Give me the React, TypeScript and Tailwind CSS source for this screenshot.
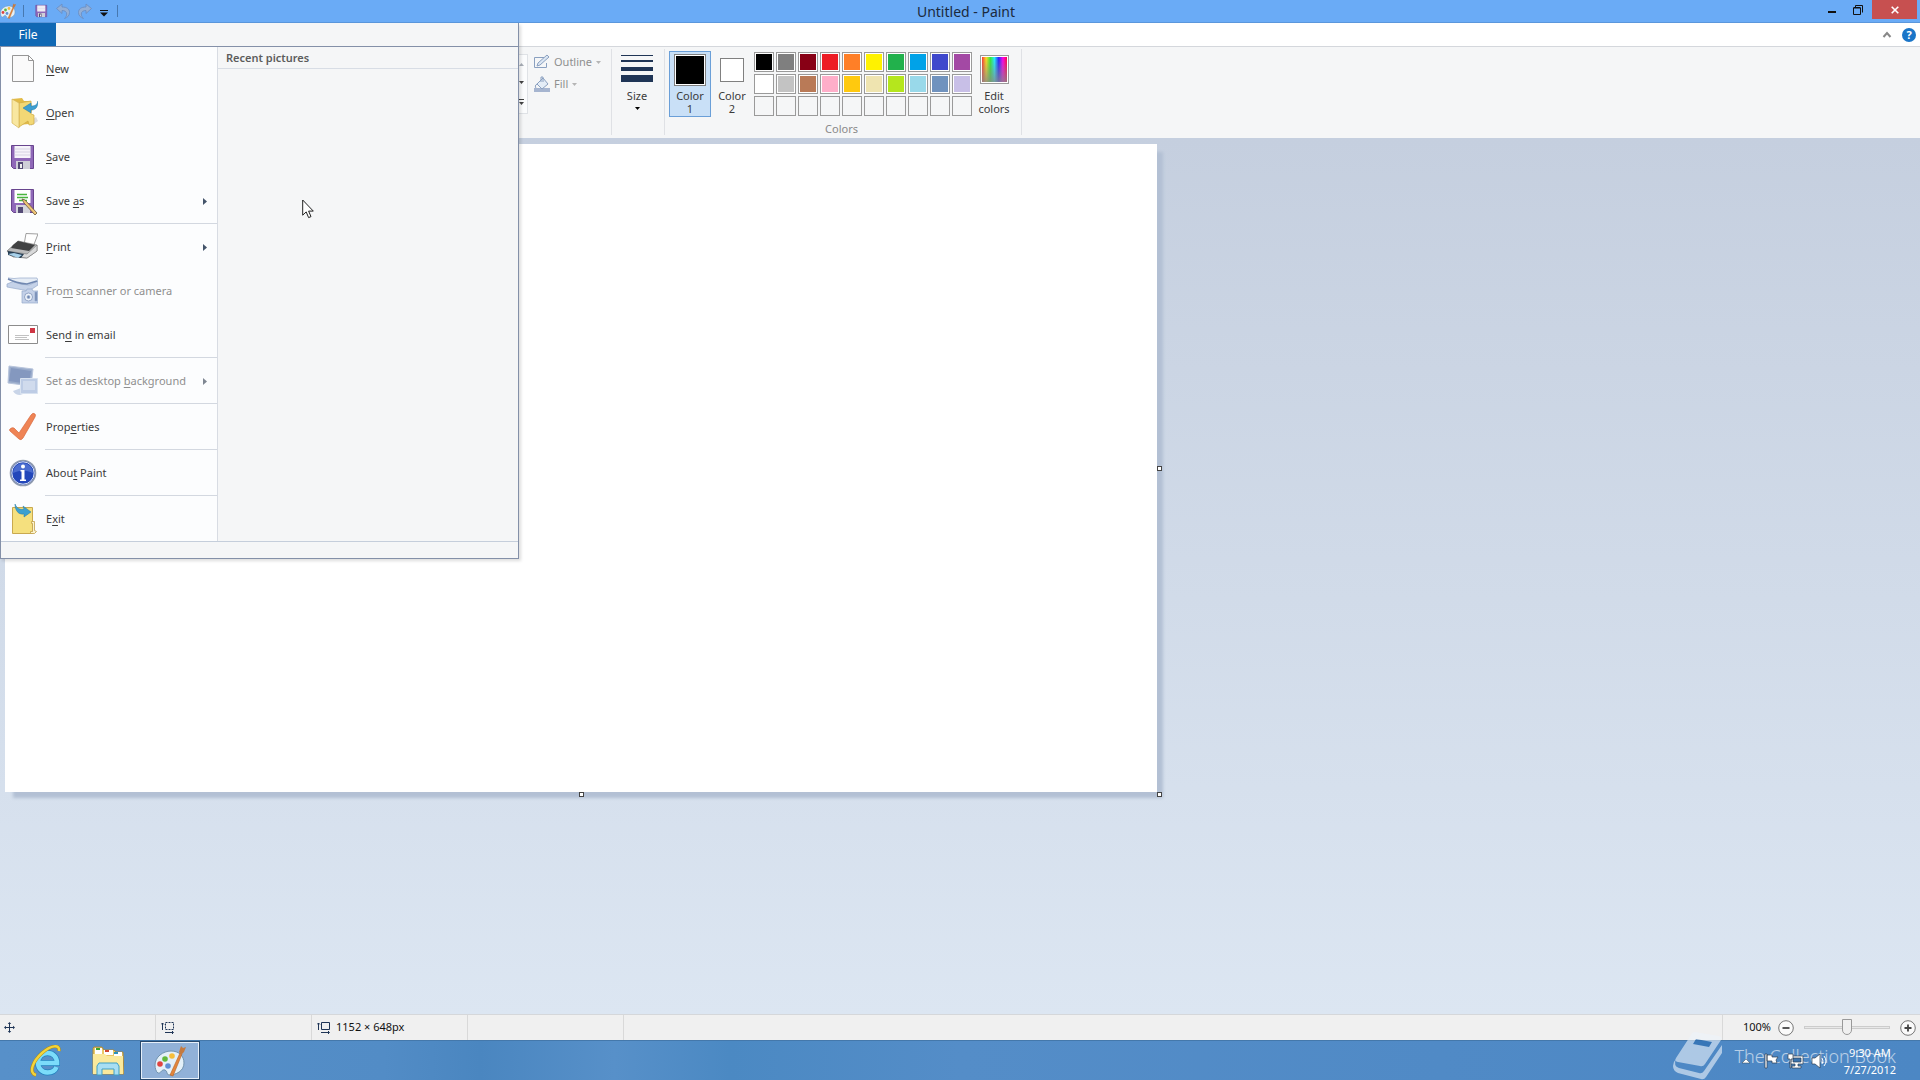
import { useState, type ReactNode } from "react";
import clsx from "clsx";

interface MenuEntry {
  before?: string;
  hotkey: string;
  after?: string;
  icon: ReactNode;
  arrow?: boolean;
  disabled?: boolean;
}

const MENU_GROUPS: MenuEntry[][] = [
  [
    { hotkey: "N", after: "ew", icon: <NewIcon /> },
    { hotkey: "O", after: "pen", icon: <OpenIcon /> },
    { hotkey: "S", after: "ave", icon: <FloppyIcon /> },
    { before: "Save ", hotkey: "a", after: "s", icon: <SaveAsIcon />, arrow: true },
  ],
  [
    { hotkey: "P", after: "rint", icon: <PrintIcon />, arrow: true },
    { before: "Fro", hotkey: "m", after: " scanner or camera", icon: <ScannerIcon />, disabled: true },
    { before: "Sen", hotkey: "d", after: " in email", icon: <MailIcon /> },
  ],
  [
    { before: "Set as desktop ", hotkey: "b", after: "ackground", icon: <DesktopIcon />, arrow: true, disabled: true },
  ],
  [{ before: "Prop", hotkey: "e", after: "rties", icon: <CheckIcon /> }],
  [{ before: "Abou", hotkey: "t", after: " Paint", icon: <InfoIcon /> }],
  [{ before: "E", hotkey: "x", after: "it", icon: <ExitIcon /> }],
];

const PALETTE = [
  { name: "Black", fill: "bg-black" },
  { name: "Gray-50%", fill: "bg-[#7f7f7f]" },
  { name: "Dark red", fill: "bg-[#880015]" },
  { name: "Red", fill: "bg-[#ed1c24]" },
  { name: "Orange", fill: "bg-[#ff7f27]" },
  { name: "Yellow", fill: "bg-[#fff200]" },
  { name: "Green", fill: "bg-[#22b14c]" },
  { name: "Turquoise", fill: "bg-[#00a2e8]" },
  { name: "Indigo", fill: "bg-[#3f48cc]" },
  { name: "Purple", fill: "bg-[#a349a4]" },
  { name: "White", fill: "bg-white" },
  { name: "Gray-25%", fill: "bg-[#c3c3c3]" },
  { name: "Brown", fill: "bg-[#b97a57]" },
  { name: "Rose", fill: "bg-[#ffaec9]" },
  { name: "Gold", fill: "bg-[#ffc90e]" },
  { name: "Light yellow", fill: "bg-[#efe4b0]" },
  { name: "Lime", fill: "bg-[#b5e61d]" },
  { name: "Light turquoise", fill: "bg-[#99d9ea]" },
  { name: "Blue-gray", fill: "bg-[#7092be]" },
  { name: "Lavender", fill: "bg-[#c8bfe7]" },
];

export default function App() {
  return (
    <div className="relative flex h-screen flex-col overflow-hidden font-['Noto_Sans','Open_Sans',sans-serif] text-[11px] text-[#3b3b3b]">
      <TitleBar />
      <TabStrip />
      <Ribbon />
      <Workspace />
      <StatusBar />
      <Taskbar />
      <FileMenu />
      <svg className="absolute left-[302px] top-[199px] h-5 w-3" viewBox="0 0 12 20">
        <path d="M.7 1v15.200l3.500-3.300 2.400 5.700 2.400-1-2.400-5.500h4.700z" fill="#fff" stroke="#222" />
      </svg>
    </div>
  );
}

function TitleBar() {
  return (
    <header className="flex h-[23px] shrink-0 items-start justify-between border-b border-[#5b97dc] bg-[#6aabf6]">
      <div className="flex h-full flex-1 items-center">
        <PaletteIcon className="h-4 w-4" />
        <span className="ml-[7px] h-3 w-px bg-[#4778b0]" />
        <button type="button" aria-label="Save" className="ml-[9px] h-4 w-4">
          <FloppyIcon className="h-4 w-4" />
        </button>
        <button type="button" aria-label="Undo" className="ml-1.5" disabled>
          <UndoIcon />
        </button>
        <button type="button" aria-label="Redo" className="ml-1.5" disabled>
          <UndoIcon className="-scale-x-100" />
        </button>
        <button type="button" aria-label="Customize Quick Access Toolbar" className="ml-[7px]">
          <svg className="mt-1 h-[7px] w-2" viewBox="0 0 8 7">
            <path d="M0 .5h8" stroke="#111" />
            <path d="M0 2.500h8L4 6.500z" fill="#111" />
          </svg>
        </button>
        <span className="ml-[9px] h-3 w-px bg-[#4778b0]" />
      </div>
      <h1 className="pl-3 text-sm leading-[23px] text-[#1b2a3d]">Untitled - Paint</h1>
      <div className="flex flex-1 justify-end">
        <button type="button" aria-label="Minimize" className="flex h-[19px] w-[26px] items-center justify-center">
          <svg className="h-3 w-2.5" viewBox="0 0 10 12">
            <path d="M1 8h8" stroke="#111" strokeWidth="2" />
          </svg>
        </button>
        <button type="button" aria-label="Restore" className="flex h-[19px] w-[27px] items-center pl-2">
          <svg className="h-2.5 w-2.5" viewBox="0 0 10 10" fill="none" stroke="#111">
            <path d="M.5 3h7v6.500h-7zM2.500 .5H9.500v7M0.500 2.500h7M2.500.5v2" />
          </svg>
        </button>
        <button type="button" aria-label="Close" className="mr-[3px] flex h-[19px] w-[45px] items-center justify-center bg-[#c75050]">
          <svg className="h-2 w-2" viewBox="0 0 8 8">
            <path d="M.7.7l6.600 6.600M7.300.7L.7 7.300" stroke="#fff" strokeWidth="1.600" />
          </svg>
        </button>
      </div>
    </header>
  );
}

function TabStrip() {
  return (
    <div className="flex h-6 shrink-0 items-center justify-end gap-2.5 border-b border-[#d4d7dc] bg-white pr-1">
      <button type="button" aria-label="Minimize the Ribbon">
        <svg className="h-2 w-2.5" viewBox="0 0 10 8">
          <path d="M1.500 6L5 2l3.500 4" fill="none" stroke="#888" strokeWidth="2" />
        </svg>
      </button>
      <button type="button" aria-label="Help" className="h-3.5 w-3.5 rounded-full bg-[#1a75c8] text-[11px] font-bold leading-3.5 text-white">
        ?
      </button>
    </div>
  );
}

function Ribbon() {
  const [activeColor, setActiveColor] = useState(1);

  return (
    <section aria-label="Home ribbon" className="flex h-[91px] shrink-0 bg-[#f5f6f7] pl-[519px]">
      <div className="mt-[7px] flex h-[60px] w-[9px] flex-col justify-between border border-l-0 border-[#dfe2e6] bg-[#fbfcfd] py-2">
        <Caret className="fill-[#a9afb8] -scale-y-100" />
        <Caret className="fill-[#444]" />
        <div className="flex flex-col gap-0.5">
          <span className="h-px w-[5px] bg-[#444]" />
          <Caret className="fill-[#444]" />
        </div>
      </div>
      <div className="flex w-[83px] flex-col items-start gap-1.5 pl-1.5 pt-[7px] text-[#8f8f8f]">
        <button type="button" disabled className="flex h-4 items-center gap-1">
          <OutlineIcon />
          Outline
          <Caret className="fill-[#b5b5b5]" />
        </button>
        <button type="button" disabled className="flex h-4 items-center gap-1">
          <FillIcon />
          Fill
          <Caret className="fill-[#b5b5b5]" />
        </button>
      </div>
      <Divider />
      <button type="button" className="flex w-[52px] flex-col items-center pr-0.5 pt-2">
        <svg className="h-7 w-8" viewBox="0 0 32 28" fill="#1f3556">
          <path d="M0 0h32v1H0zM0 5h32v2H0zM0 12h32v4H0zM0 20h32v7H0z" />
        </svg>
        <span className="mt-1.5 leading-[13px]">Size</span>
        <Caret className="mt-[5px] fill-black" />
      </button>
      <Divider />
      <div className="flex flex-col pl-1 pt-1">
        <div className="flex">
          <ColorSlot
            number={1}
            active={activeColor === 1}
            swatch="h-8 w-8 bg-black"
            onSelect={() => setActiveColor(1)}
          />
          <ColorSlot
            number={2}
            active={activeColor === 2}
            swatch="my-1 h-6 w-6 bg-white"
            onSelect={() => setActiveColor(2)}
          />
          <div className="ml-px mt-px grid grid-cols-10 content-start gap-0.5">
            {PALETTE.map((color) => (
              <button
                key={color.name}
                type="button"
                aria-label={color.name}
                className="h-5 w-5 border border-[#9a9a9a] bg-white p-px"
              >
                <span className={clsx("block h-full", color.fill)} />
              </button>
            ))}
            {Array.from({ length: 10 }, (_, i) => (
              <button
                key={i}
                type="button"
                aria-label={`Custom color ${i + 1}`}
                className="h-5 w-5 border border-[#9a9a9a] bg-[#f5f6f7]"
              />
            ))}
          </div>
          <button type="button" className="flex w-11 flex-col items-center pt-1">
            <span className="h-[29px] w-[29px] border border-[#9a9a9a] bg-white p-px">
              <span className="block h-full bg-[linear-gradient(to_top,#888c,transparent),linear-gradient(to_right,#f33,#fd2,#3e3,#2ef,#22f,#f0e,#f04)]" />
            </span>
            <span className="mt-[5px] leading-[13px]">Edit colors</span>
          </button>
        </div>
        <span className="mt-1 self-center pr-0.5 leading-4 text-[#8a8a8a]">Colors</span>
      </div>
      <div className="ml-[5px] flex">
        <Divider />
      </div>
    </section>
  );
}

function ColorSlot({
  number,
  active,
  swatch,
  onSelect,
}: {
  number: number;
  active: boolean;
  swatch: string;
  onSelect: () => void;
}) {
  return (
    <button
      type="button"
      aria-pressed={active}
      onClick={onSelect}
      className={clsx(
        "flex h-[66px] w-[42px] flex-col items-center border pt-0.5",
        active ? "border-[#6a9fd8] bg-[#c9e0f7]" : "border-transparent"
      )}
    >
      <span className={clsx("border border-[#808080] outline-offset-[-2px]", active && "outline outline-white", swatch)} />
      <span className="mt-[3px] w-8 leading-[13px]">Color {number}</span>
    </button>
  );
}

function Divider() {
  return <span className="my-0.5 h-[86px] w-px bg-[#dfe1e5]" />;
}

function Caret({ className }: { className?: string }) {
  return (
    <svg className={clsx("h-[3px] w-[5px] shrink-0", className)} viewBox="0 0 5 3">
      <path d="M0 0h5L2.500 3z" />
    </svg>
  );
}

function Workspace() {
  return (
    <main className="min-h-0 flex-1 bg-linear-to-b from-[#c5cfdf] to-[#dce6f2] pl-[5px] pt-1.5">
      <div className="relative h-[648px] w-[1152px] bg-white shadow-[7px_7px_3px_-1px_#b3c0d4]">
        <span className="absolute -right-[5px] top-[322px] h-[5px] w-[5px] border border-[#444] bg-white" />
        <span className="absolute -bottom-[5px] left-[574px] h-[5px] w-[5px] border border-[#444] bg-white" />
        <span className="absolute -bottom-[5px] -right-[5px] h-[5px] w-[5px] border border-[#444] bg-white" />
      </div>
    </main>
  );
}

function FileMenu() {
  return (
    <div className="absolute left-0 top-[23px] w-[519px] border-r border-[#8490a8] bg-[#f5f6f7] shadow-[2px_2px_3px_#0002]">
      <button type="button" className="block h-[23px] w-14 bg-[#1068b4] text-xs leading-[23px] text-white">
        File
      </button>
      <div className="border-b border-l border-t border-[#8490a8]">
        <div className="flex">
          <ul className="w-[217px] border-r border-[#d8dce3] bg-[#fcfdfe]">
            {MENU_GROUPS.map((group, i) => (
              <li key={i}>
                {i > 0 && <div className="ml-11 h-0.5 border-t border-[#d3d8e0]" />}
                {group.map((entry) => (
                  <MenuItem key={entry.hotkey} {...entry} />
                ))}
              </li>
            ))}
          </ul>
          <section className="flex-1">
            <h2 className="border-b border-[#d8dde5] pl-2 font-semibold leading-[21px] text-[#5c5c5c]">Recent pictures</h2>
          </section>
        </div>
        <div className="h-[17px] border-t border-[#c5cedb]" />
      </div>
    </div>
  );
}

function MenuItem({ before, hotkey, after, icon, arrow, disabled }: MenuEntry) {
  return (
    <button
      type="button"
      disabled={disabled}
      className={clsx("flex h-11 w-full items-center pl-[5px] pr-2.5 text-left", disabled && "text-[#8f8f8f]")}
    >
      <span className="mr-2 h-8 w-8">{icon}</span>
      <span className="flex-1 whitespace-nowrap">
        {before}
        <span className="underline underline-offset-2">{hotkey}</span>
        {after}
      </span>
      {arrow && (
        <svg className={clsx("h-[7px] w-1", disabled ? "fill-[#7f8792]" : "fill-[#44546a]")} viewBox="0 0 4 7">
          <path d="M0 0l4 3.500L0 7z" />
        </svg>
      )}
    </button>
  );
}

function StatusBar() {
  const [zoom, setZoom] = useState(50);

  return (
    <footer className="flex h-[26px] shrink-0 items-stretch border-t border-[#d5d7da] bg-[#f0f0f0] text-[#111]">
      <div className="flex w-[156px] items-center border-r border-[#d9d9d9] pl-1">
        <svg className="h-[11px] w-[11px]" viewBox="0 0 11 11" stroke="#1f3556" fill="#1f3556">
          <path d="M5.500 1v9M1 5.500h9" />
          <path d="M5.500 0l1.700 2H3.800zM5.500 11l1.700-2H3.800zM0 5.500l2-1.700v3.400zM11 5.500L9 3.800v3.400z" stroke="none" />
        </svg>
      </div>
      <div className="flex w-[156px] items-center border-r border-[#d9d9d9] pl-[5px]">
        <SizeIcon dashed />
      </div>
      <div className="flex w-[156px] items-center gap-[5px] border-r border-[#d9d9d9] pl-[5px]">
        <SizeIcon />
        1152 × 648px
      </div>
      <div className="w-[156px] border-r border-[#d9d9d9]" />
      <div className="ml-auto flex items-center border-l border-[#d9d9d9] pl-5 pr-1">
        <label htmlFor="zoom" className="mr-[7px]">100%</label>
        <ZoomButton label="Zoom out" path="M4.500 8h7" onClick={() => setZoom(Math.max(0, zoom - 10))} />
        <input
          id="zoom"
          type="range"
          min={0}
          max={100}
          value={zoom}
          onChange={(event) => setZoom(Number(event.target.value))}
          className="mx-2.5 h-4 w-[86px] appearance-none bg-transparent [&::-webkit-slider-runnable-track]:h-[3px] [&::-webkit-slider-runnable-track]:border [&::-webkit-slider-runnable-track]:border-[#ccc] [&::-webkit-slider-runnable-track]:bg-[#e8e8e8] [&::-webkit-slider-thumb]:-mt-2 [&::-webkit-slider-thumb]:h-4 [&::-webkit-slider-thumb]:w-2.5 [&::-webkit-slider-thumb]:appearance-none [&::-webkit-slider-thumb]:rounded-b-[5px] [&::-webkit-slider-thumb]:border [&::-webkit-slider-thumb]:border-[#999] [&::-webkit-slider-thumb]:bg-[#f0f0f0]"
        />
        <ZoomButton label="Zoom in" path="M4.500 8h7M8 4.500v7" onClick={() => setZoom(Math.min(100, zoom + 10))} />
      </div>
    </footer>
  );
}

function ZoomButton({ label, path, onClick }: { label: string; path: string; onClick: () => void }) {
  return (
    <button type="button" aria-label={label} onClick={onClick}>
      <svg className="h-4 w-4" viewBox="0 0 16 16">
        <circle cx="8" cy="8" r="7.300" fill="#fafafa" stroke="#777" />
        <path d={path} stroke="#444" strokeWidth="1.800" />
      </svg>
    </button>
  );
}

function Taskbar() {
  return (
    <nav className="relative flex h-10 shrink-0 items-stretch border-t border-[#4478ab] bg-[linear-gradient(to_right,#5790c9,#528cc6_20%,#4a86c0_25%,#5790c9_32%,#4b89c3_38%,#548dc8_50%,#4c87c4)] pl-[15px]">
      <button type="button" aria-label="Internet Explorer" className="flex w-[62px] items-center justify-center">
        <BrowserIcon />
      </button>
      <button type="button" aria-label="File Explorer" className="flex w-[62px] items-center justify-center">
        <ExplorerIcon />
      </button>
      <button type="button" aria-label="Paint" className="ml-px flex w-[60px] items-center justify-center border border-[#27486d] bg-[#91b1d8] outline outline-offset-[-2px] outline-[#e6eff9]">
        <PaletteIcon className="h-8 w-8" />
      </button>
      <div className="absolute -top-[9px] right-6 flex items-center gap-3 text-lg text-white opacity-60">
        <BookIcon />
        <span className="whitespace-nowrap font-light">The Collection Book</span>
      </div>
      <div className="relative ml-auto flex items-center pr-6">
        <svg className="mr-3.5 h-1.5 w-2" viewBox="0 0 8 6" fill="#fff" stroke="#345" strokeWidth=".5">
          <path d="M0 5l4-4 4 4z" />
        </svg>
        <TrayIcons />
        <time className="ml-4 text-center leading-[17px] text-white">
          9:30 AM
          <br />
          7/27/2012
        </time>
      </div>
    </nav>
  );
}

function TrayIcons() {
  return (
    <svg className="h-4 w-[64px]" viewBox="0 0 64 16" fill="#fff" stroke="#2c3e52" strokeWidth=".7">
      <path d="M1 1h2v14H1zM3 2h5v2h6l-2 3 1 3H8V8H3z" />
      <path d="M27 3h12v8h-5v2h3v2h-9v-2h3v-2h-5V9h1z" />
      <path d="M29 5h8v4h-8z" fill="#3b73ae" />
      <path d="M24 1h5v5h-2v9h-1V6h-2z" />
      <path d="M48 5h3l5-4v14l-5-4h-3z" />
      <path d="M58 5q2 3 0 6M60 3q4 5 0 10" fill="none" stroke="#fff" strokeWidth="1" />
    </svg>
  );
}

function BookIcon() {
  return (
    <svg className="h-12 w-[50px]" viewBox="0 0 50 48" fill="#edf4fb">
      <path d="M18 3q1-3 4-3l24 4q4 1 2 4L32 32q-2 3-5 2L5 30q-4-1-2-4z" />
      <path d="M3 27q-3 7 3 9l20 5q3 1 5-2l18-26v8L33 45q-2 3-5 2L5 41q-5-2-5-7 0-4 3-7z" />
      <path d="M23 7l16 3-3 5-16-3z" fill="#2b6cb0" />
    </svg>
  );
}

function PaletteIcon({ className }: { className: string }) {
  return (
    <svg className={className} viewBox="0 0 32 32">
      <path d="M1 20C1 12 9 6 17 6c8 0 13 5 13 12 0 8-8 12-15 12-3 0-1-4-4-5-4-1-4 4-7 3-2-1-3-5-3-8z" fill="#e4f0f8" stroke="#7193ae" />
      <circle cx="6" cy="19" r="2.800" fill="#e0443f" />
      <circle cx="11" cy="14" r="2.800" fill="#62b83c" />
      <circle cx="18" cy="11" r="2.800" fill="#f6be3b" />
      <circle cx="14" cy="21" r="2.800" fill="#5f8fd5" />
      <path d="M26 8l2 1-9 22-3-1z" fill="#e2853d" stroke="#b86424" strokeWidth=".6" />
      <path d="M25 7l2-6 2 2 3-1-2 5-3 3z" fill="#c47a40" />
    </svg>
  );
}

function BrowserIcon() {
  return (
    <svg className="h-8 w-8" viewBox="0 0 32 32" fill="none">
      <path d="M26.500 22C25 26 21 27.500 17.500 27.500c-6 0-9.500-4.500-9.500-10s4-9.500 9.500-9.500 9.500 4 9.500 10H10" stroke="#2280bd" strokeWidth="6" />
      <path d="M26.500 22C25 26 21 27.500 17.500 27.500c-6 0-9.500-4.500-9.500-10s4-9.500 9.500-9.500 9.500 4 9.500 10H10" stroke="#7bdcfa" strokeWidth="4.600" />
      <path d="M6 30C-2 28 3 16 12 8S30-1 29 6" stroke="#b08a1a" strokeWidth="3.400" />
      <path d="M6 30C-2 28 3 16 12 8S30-1 29 6" stroke="#f3d43a" strokeWidth="2.400" />
    </svg>
  );
}

function ExplorerIcon() {
  return (
    <svg className="h-8 w-8" viewBox="0 0 32 32">
      <path d="M1 29V3l1-1h8l2 3h10l2 2h7l1 22z" fill="#e9c968" stroke="#a8893e" />
      <path d="M3 3h7v6H3zM12 5h9v5h-9zM22 7h8v4h-8z" fill="#fff" />
      <path d="M4 3h4v2H4z" fill="#3aa52d" />
      <path d="M13 5h4v2h-4z" fill="#d04a31" />
      <path d="M22 7h4v2h-4z" fill="#2a93bd" />
      <path d="M1 9h12l2 2h16v18H1z" fill="#fae99c" />
      <path d="M5 30V21l2-3h18l2 3v9h-5v-6H10v6z" fill="#a7def3" stroke="#3e9fc5" />
    </svg>
  );
}

function UndoIcon({ className }: { className?: string }) {
  return (
    <svg className={clsx("h-4 w-4", className)} viewBox="0 0 16 16">
      <path d="M1.500 5.500L7 1v3c5 0 7.500 2 7.500 5.500 0 3-2 5-5 6 1.500-1.500 2.200-3 2.200-4.500C11.700 8.500 9.500 7.500 7 7.500v3z" fill="#93afd6" stroke="#6a8fc4" strokeWidth=".9" />
    </svg>
  );
}

function OutlineIcon() {
  return (
    <svg className="h-4 w-4" viewBox="0 0 16 16" fill="none" stroke="#8aa0c0">
      <path d="M10 3.500H.5v10h12V9" />
      <path d="M3 12l1-3 9-8 2 2-9 8z" fill="#dbe6f3" />
    </svg>
  );
}

function FillIcon() {
  return (
    <svg className="h-4 w-4" viewBox="0 0 16 16">
      <path d="M0 12h16v4H0z" fill="#a6b5d0" />
      <path d="M3 8l6-6 5 6-6 5z" fill="#e4edf7" stroke="#8aa0c0" />
      <path d="M7 6V1h2v5M3 8c-2 1-2 3-1 4" fill="none" stroke="#8aa0c0" />
    </svg>
  );
}

function SizeIcon({ dashed }: { dashed?: boolean }) {
  return (
    <svg className="h-3 w-3.5" viewBox="0 0 14 12" fill="none" stroke="#1f3556">
      <path d="M1.500 8V1M0 2.500L1.500 1 3 2.500M4 10.500h8M11 9l1.500 1.500L11 12" />
      <path d="M4.500.5h8v7h-8z" strokeDasharray={dashed ? "2 1" : undefined} />
    </svg>
  );
}

function NewIcon() {
  return (
    <svg className="h-8 w-8" viewBox="0 0 32 32">
      <path d="M6.500 2.500h16l5 5v21h-21z" fill="#fafafa" stroke="#969696" />
      <path d="M22.500 2.500v5h5z" fill="#fff" stroke="#969696" />
    </svg>
  );
}

function OpenIcon() {
  return (
    <svg className="h-8 w-8" viewBox="0 0 32 32">
      <path d="M24 24l6-4 2 4-7 5z" fill="#ddd" />
      <path d="M6 2l10-1 2 3 7 0 1 8-3 15-11 1z" fill="#e2bb47" />
      <path d="M13 6l12-2 0 13 3 1 0 9-5 1-1-4-9 6z" fill="#f2d875" stroke="#d0aa42" strokeWidth=".7" />
      <path d="M6 2l7 4v25l-7-5z" fill="#f8e7a0" stroke="#d5b558" strokeWidth=".7" />
      <path d="M17 11l8-5v3c4 0 6-1 7-5 0 7-3 9-7 9v3z" fill="#3d9fd1" stroke="#257ba8" strokeWidth=".5" />
    </svg>
  );
}

function FloppyIcon({ className = "h-8 w-8" }: { className?: string }) {
  return (
    <svg className={className} viewBox="0 0 32 32">
      <path d="M5.500 4.500h22v23h-20l-2-2z" fill="#8f68b8" stroke="#68458e" />
      <path d="M8.500 5h16v12h-16z" fill="#f6f4fa" />
      <path d="M8.500 8h16M8.500 11h16M8.500 14h16" stroke="#cfcbdc" strokeWidth=".8" />
      <path d="M10 20h14v8H10z" fill="#cfcfd8" />
      <path d="M12 21h5v7h-5z" fill="#544b76" />
      <path d="M14 23h2v4h-2z" fill="#eee" />
    </svg>
  );
}

function SaveAsIcon() {
  return (
    <svg className="h-8 w-8" viewBox="0 0 32 32">
      <path d="M5.500 4.500h22v23h-20l-2-2z" fill="#8f68b8" stroke="#68458e" />
      <path d="M8.500 5h16v13h-16z" fill="#fff" />
      <path d="M11 9.500h10M11 12.500h11M13 15.500h8" stroke="#49b53d" strokeWidth="1.300" />
      <path d="M10 20h14v8H10z" fill="#d5d5dc" />
      <path d="M12 22h5v6h-5z" fill="#544b76" />
      <path d="M16 14l3 1 12 13-2 2-11-12z" fill="#f0c477" stroke="#66553c" strokeWidth=".8" />
    </svg>
  );
}

function PrintIcon() {
  return (
    <svg className="h-8 w-8" viewBox="0 0 32 32">
      <path d="M20 2.500l12 .5-5 13-9-2z" fill="#fff" stroke="#888" strokeWidth=".8" />
      <path d="M1 20l11-10 19 4v6l-10 7-14-1z" fill="#b9babb" stroke="#666" strokeWidth=".6" />
      <path d="M7 14l5-4 17 4-6 6-18-3z" fill="#414243" />
      <path d="M1 20l20 3 10-9v6l-10 7-16-2z" fill="#d9dadb" stroke="#666" strokeWidth=".5" />
      <path d="M2 20l16 3-3 4-13-3z" fill="#253c52" />
      <path d="M2 23l6-1 8 2-4 3z" fill="#a8d1ea" />
    </svg>
  );
}

function ScannerIcon() {
  return (
    <svg className="h-8 w-8" viewBox="0 0 32 32" stroke="#97aacb" strokeWidth=".7">
      <path d="M1 9l10-4 21 1v4l-9 6L1 12z" fill="#c5d2e8" />
      <path d="M2 3q6 1 12 0h17l1 3-9 4q-8 0-15-3z" fill="#e5ecf5" />
      <path d="M2 4q8 4 19 5l10-3" fill="none" stroke="#7188b1" strokeWidth="1.500" />
      <path d="M16 16h4l1-2h5l1 2h5v12H16z" fill="#c4d1e8" />
      <circle cx="22.500" cy="22" r="4" fill="#eef3fa" stroke="#7188b1" />
      <circle cx="22.500" cy="22" r="1.500" fill="#7188b1" />
      <path d="M29 17h2v9h-2z" fill="#7188b1" />
    </svg>
  );
}

function MailIcon() {
  return (
    <svg className="h-8 w-8" viewBox="0 0 32 32">
      <path d="M2.500 6.500h29v18h-29z" fill="#fff" stroke="#8c8c8c" />
      <path d="M24 9h5v5h-5z" fill="#cf3745" />
      <path d="M9 16.500h14M9 18.500h12M9 20.500h14" stroke="#b2b2b2" strokeWidth=".8" />
    </svg>
  );
}

function DesktopIcon() {
  return (
    <svg className="h-8 w-8" viewBox="0 0 32 32">
      <path d="M3 1l24 3-2 17-23-3z" fill="#9aaccb" stroke="#b8c5dc" />
      <path d="M5 3l20 3-2 13-20-3z" fill="#8498bf" />
      <path d="M7 26l8-3 5 5-6 2q-5 0-7-4z" fill="#c9d5e8" />
      <path d="M14.500 13.500h17v15h-17z" fill="#bdcce5" stroke="#d8e2f0" />
      <path d="M17 16h12v9H17z" fill="#d0dbed" />
    </svg>
  );
}

function CheckIcon() {
  return (
    <svg className="h-8 w-8" viewBox="0 0 32 32">
      <path d="M4 18q2-2 4-1l5 5L25 4q2-3 4-1 1 1 0 3L17 27q-2 3-4 1l-9-8q-1-1 0-2z" fill="#ef8455" stroke="#d8693d" strokeWidth=".7" strokeLinejoin="round" />
    </svg>
  );
}

function InfoIcon() {
  return (
    <svg className="h-8 w-8" viewBox="0 0 32 32">
      <circle cx="17" cy="16" r="12.500" fill="#2347ba" stroke="#909baf" strokeWidth="1.600" />
      <circle cx="17" cy="16" r="11.200" fill="none" stroke="#dce4f2" />
      <path d="M7 16a10 10 0 0120 0q-10-5-20 0z" fill="#5b7cd8" opacity=".7" />
      <circle cx="17" cy="9.500" r="2" fill="#fff" />
      <path d="M14.500 13h4v9.500h1.500v1.500h-6v-1.500h1.500v-8h-1z" fill="#fff" />
    </svg>
  );
}

function ExitIcon() {
  return (
    <svg className="h-8 w-8" viewBox="0 0 32 32">
      <path d="M6.500 4.500h20v26h-20z" fill="#f5e07e" stroke="#c9a94f" />
      <path d="M25.500 18.500h3v9l2 1-2 2h-4v-2h2v-8h-1z" fill="#fbf3cf" stroke="#c0a04a" strokeWidth=".8" />
      <path d="M9 1c2 5 6 6 9 5l-1-3 8 6-7 5v-3C12 12 9 7 9 1z" fill="#3ba0d0" stroke="#26799f" strokeWidth=".5" />
    </svg>
  );
}
